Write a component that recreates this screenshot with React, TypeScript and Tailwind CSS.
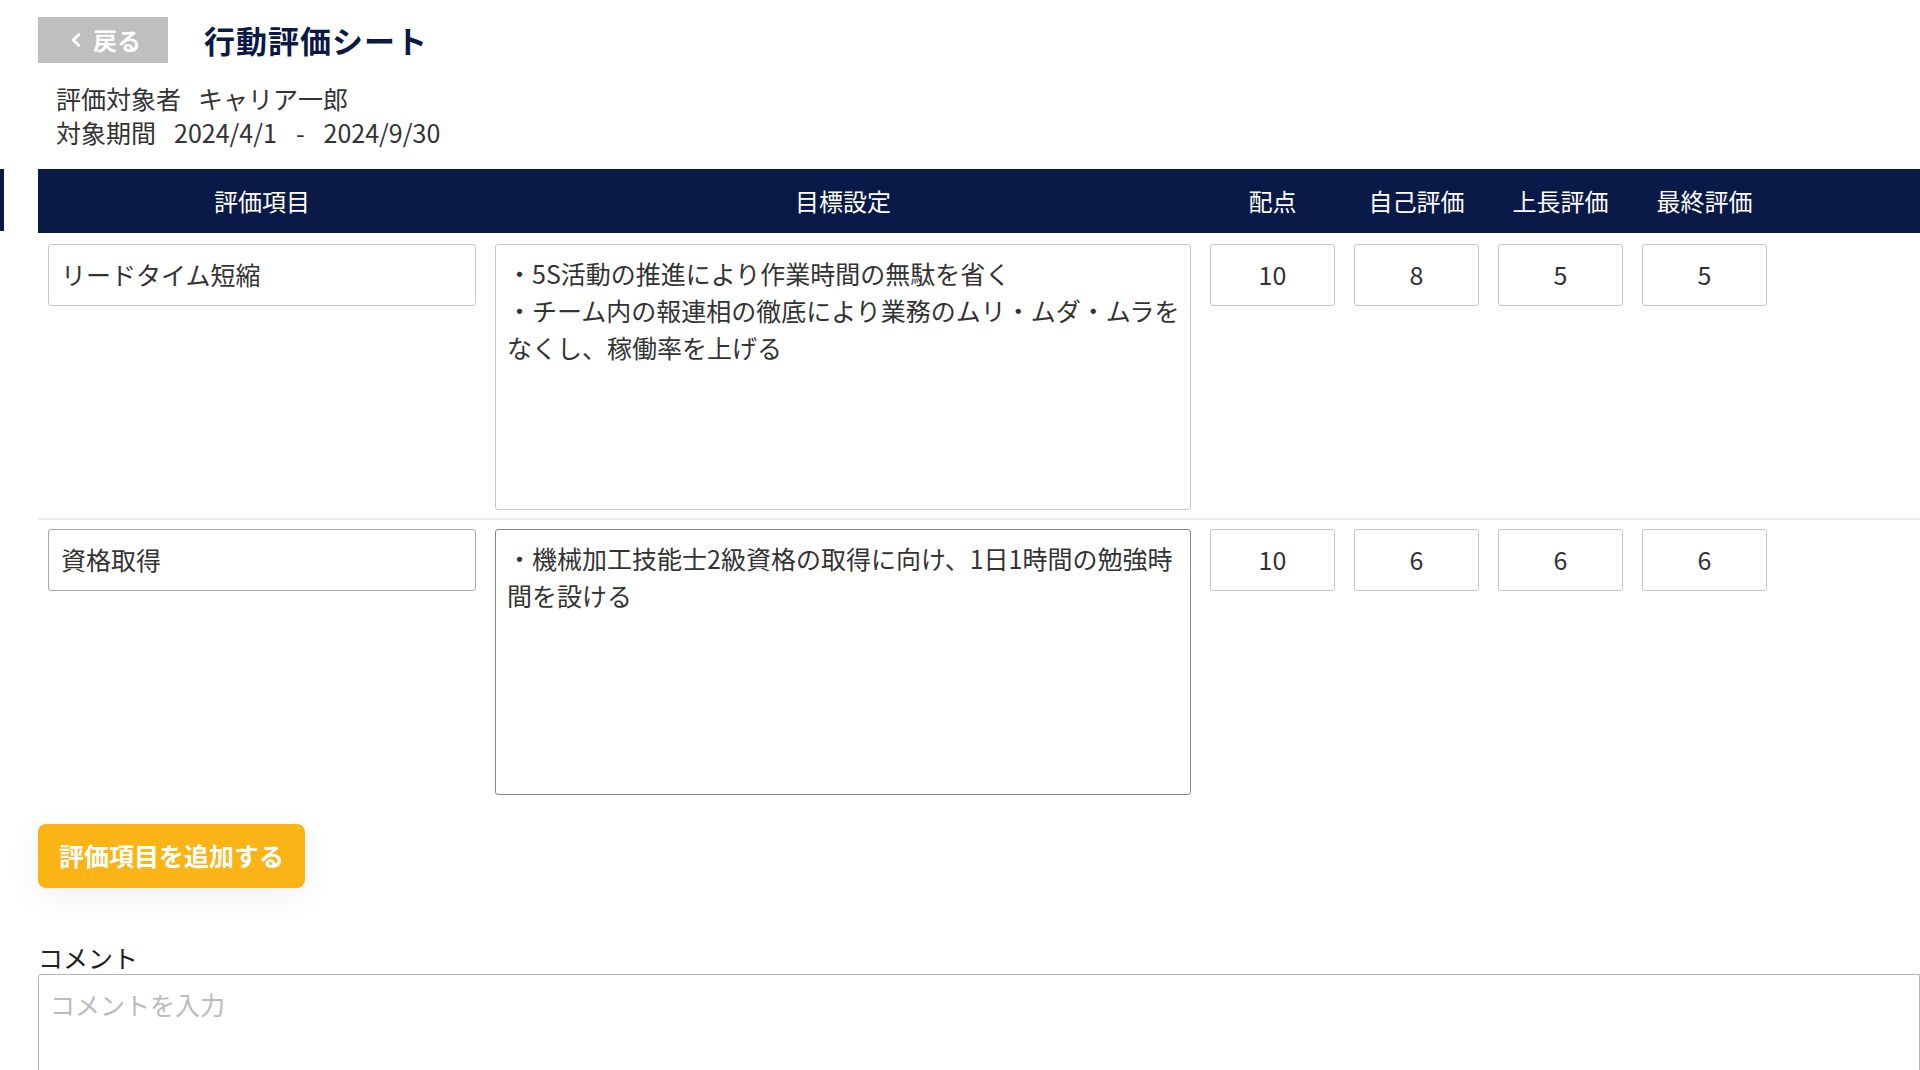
import { ChevronLeft } from 'lucide-react';

const rows = [
  {
    name: 'リードタイム短縮',
    goal: '・5S活動の推進により作業時間の無駄を省く\n・チーム内の報連相の徹底により業務のムリ・ムダ・ムラを\nなくし、稼働率を上げる',
    scores: ['10', '8', '5', '5'],
    divider: true,
    dark: false,
  },
  {
    name: '資格取得',
    goal: '・機械加工技能士2級資格の取得に向け、1日1時間の勉強時\n間を設ける',
    scores: ['10', '6', '6', '6'],
    divider: false,
    dark: true,
  },
];

const cols = 'grid grid-cols-[428px_696px_125px_125px_125px_125px] gap-x-[19px]';

export default function App() {
  return (
    <div
      className="relative min-h-screen bg-white text-[#333]"
      style={{ fontFamily: '"Noto Sans CJK JP", "Noto Sans", sans-serif' }}
    >
      {/* 左端のサイドバーの縁 */}
      <div className="absolute left-0 top-[169px] h-[62px] w-[4px] bg-[#0a1a48]" />

      <div className="pl-[38px] pt-[17px]">
        {/* ヘッダー */}
        <div className="flex items-center gap-[36px]">
          <button className="flex h-[46px] w-[130px] items-center justify-center gap-[6px] bg-[#bfbfbf] text-[24px] font-bold text-white">
            <ChevronLeft size={22} strokeWidth={3} />
            戻る
          </button>
          <h1 className="text-[31px] font-bold tracking-[1px] text-[#0b1a45]">行動評価シート</h1>
        </div>

        <div className="mt-[17px] pl-[18px] text-[25px] leading-[34px] text-[#333]">
          <p>
            評価対象者<span className="ml-[17px]">キャリア一郎</span>
          </p>
          <p>
            対象期間<span className="ml-[18px]">2024/4/1</span>
            <span className="mx-[19px]">-</span>
            2024/9/30
          </p>
        </div>

        {/* テーブル */}
        <div className="mt-[20px]">
          <div className={`${cols} h-[64px] items-center bg-[#0a1a48] pl-[10px] text-[24px] text-white`}>
            <div className="text-center">評価項目</div>
            <div className="text-center">目標設定</div>
            <div className="text-center">配点</div>
            <div className="text-center">自己評価</div>
            <div className="text-center">上長評価</div>
            <div className="text-center">最終評価</div>
          </div>

          {rows.map((row) => (
            <div
              key={row.name}
              className={`${cols} items-start pl-[10px] ${row.divider ? 'border-b-2 border-[#f0f0f0] pb-[8px] pt-[11px]' : 'pt-[9px]'}`}
            >
              <div
                className={`flex h-[62px] items-center rounded-[3px] border px-[12px] text-[25px] ${row.dark ? 'border-[#aaa]' : 'border-[#c8c8c8]'}`}
              >
                {row.name}
              </div>
              <div
                className={`h-[266px] overflow-hidden whitespace-pre rounded-[3px] border px-[11px] pt-[10px] text-[25px] leading-[37px] ${row.dark ? 'border-[#888]' : 'border-[#c8c8c8]'}`}
              >
                {row.goal}
              </div>
              {row.scores.map((s, i) => (
                <div
                  key={i}
                  className="flex h-[62px] items-center justify-center rounded-[3px] border border-[#c8c8c8] text-[25px]"
                >
                  {s}
                </div>
              ))}
            </div>
          ))}
        </div>

        <button className="mt-[29px] h-[64px] w-[267px] rounded-[8px] bg-[#fbb416] text-[25px] font-bold text-white shadow-[0_8px_30px_rgba(60,60,120,0.08)]">
          評価項目を追加する
        </button>

        {/* コメント */}
        <p className="mt-[52px] text-[25px] leading-[34px] text-[#222]">コメント</p>
        <textarea
          placeholder="コメントを入力"
          className="block h-[140px] w-full resize-none rounded-tl-[3px] border border-[#b5b5b5] px-[11px] pt-[12px] text-[25px] leading-[34px] outline-none placeholder:text-[#bbb]"
        />
      </div>
    </div>
  );
}
